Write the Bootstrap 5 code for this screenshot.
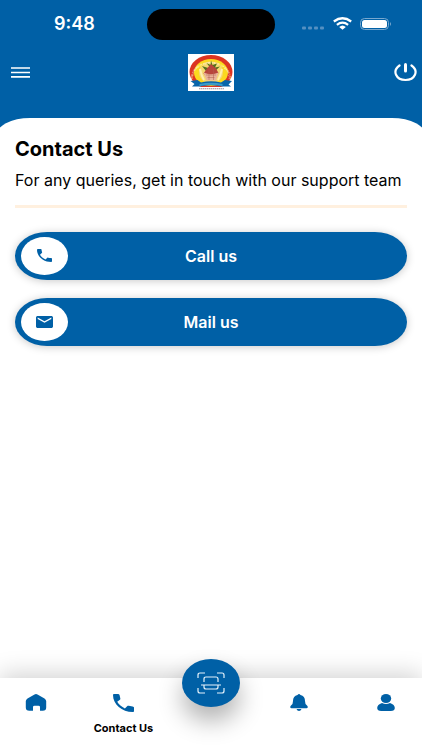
<!DOCTYPE html>
<html lang="en">
<head>
<meta charset="utf-8">
<meta name="viewport" content="width=device-width, initial-scale=1">
<title>Contact Us</title>
<link href="https://cdn.jsdelivr.net/npm/bootstrap@5.3.0/dist/css/bootstrap.min.css" rel="stylesheet">
<style>
:root { --brand: #0060a6; }
body { font-family: Inter, "Open Sans", sans-serif; background: var(--brand); color: #000; overflow-x: hidden; }
svg { display: block; }
.status { height: 49px; padding: 9px 30px 0; }
.clock { font-size: 18px; line-height: 30px; font-weight: 600; flex: 1 1 0; }
.island { width: 128px; height: 31px; border-radius: 16px; background: #000; }
.signals { flex: 1 1 0; gap: 8px; }
.topbar { height: 69px; padding: 5px 5px 0; }
.topbar .side { flex: 1 1 0; }
.menu { margin-left: 5px; }
.sheet { background: #fff; border-radius: 34px 34px 0 0 / 18px 18px 0 0; margin: 0 -4px; padding: 19px 19px; }
.title { font-size: 20px; line-height: 24px; font-weight: 700; margin: 0 0 8px; }
.intro { font-size: 16px; line-height: 22px; margin: 0 0 14px; }
.rule { height: 3px; background: #fff0df; border: 0; opacity: 1; margin: 0 0 24px; }
.actions { gap: 18px; }
.action { height: 48px; border: 0; border-radius: 32px / 24px; background: var(--brand); color: #fff;
  font-size: 16px; line-height: 22px; font-weight: 600; padding: 4px 6px 5px; box-shadow: 0 1px 8px rgba(0,0,0,.22); }
.action:hover { background: #00528f; color: #fff; }
.disc { width: 47px; height: 38px; border-radius: 50%; background: #fff; }
.tabs { background: #fff; height: 72px; box-shadow: 0 -4px 24px rgba(0,0,0,.18); }
.tab { width: 72px; padding-top: 16px; gap: 9px; color: #000; font-size: 11px; line-height: 14px; font-weight: 700; }
.scan { width: 58px; height: 48px; border: 0; border-radius: 50%; background: var(--brand); margin-top: -19px;
  box-shadow: 0 14px 24px rgba(0,0,0,.3); }
.seal { font: 700 5px Inter, sans-serif; fill: #fff3c8; text-anchor: middle; }
</style>
<script src="https://cdn.jsdelivr.net/npm/bootstrap@5.3.0/dist/js/bootstrap.bundle.min.js"></script>
</head>
<body class="d-flex flex-column min-vh-100">
<header class="text-white">
  <div class="status d-flex align-items-start">
    <div class="clock"><span class="ps-4">9:48</span></div>
    <div class="island"></div>
    <div class="signals d-flex justify-content-end align-items-center align-self-start">
      <svg width="23" height="30" viewBox="0 0 23 30" fill="#5590c2" aria-hidden="true"><rect x="0" y="17.500" width="4" height="3" rx="1"/><rect x="6" y="17.500" width="4" height="3" rx="1"/><rect x="12" y="17.500" width="4" height="3" rx="1"/><rect x="18" y="17.500" width="4" height="3" rx="1"/></svg>
      <svg width="19" height="30" viewBox="0 0 19 30" fill="none" stroke="#fff" stroke-width="2.200" aria-hidden="true"><path d="M.8 12.500Q9.500 6 18.200 12.500M3.900 15.900Q9.500 11.500 15.100 15.900"/><path d="M6.200 18Q9.500 15 12.800 18L9.500 20.800z" fill="#fff" stroke="none"/></svg>
      <svg width="32" height="30" viewBox="0 0 32 30" aria-hidden="true"><rect x=".5" y="9.500" width="28" height="11" rx="4" fill="none" stroke="#78a8cf"/><rect x="2" y="11" width="25" height="8" rx="2.500" fill="#fff"/><path d="M30 13q2 2 0 4z" fill="#78a8cf"/></svg>
    </div>
  </div>
  <div class="topbar d-flex align-items-start">
    <div class="side">
      <button class="btn menu p-0 border-0" type="button" aria-label="Menu">
        <svg width="20" height="36" viewBox="0 0 20 36" stroke="#fff" stroke-width="1.700"><path d="M1 14h19M1 18.500h19M1 22.800h19"/></svg>
      </button>
    </div>
    <svg width="46" height="37" viewBox="0 0 92 74" role="img" aria-label="Bank logo">
      <path fill="#fff" d="M0 0h92v74H0z"/>
      <ellipse cx="46" cy="36" rx="43" ry="34" fill="#dc3422"/>
      <ellipse cx="46" cy="37" rx="34" ry="27" fill="#fbd91f"/>
      <ellipse cx="46" cy="37" rx="24" ry="22" fill="#f6d870"/>
      <path id="arc" d="M11 54A36 28 0 1 1 81 54" fill="none"/>
      <text class="seal"><textPath href="#arc" startOffset="50%">THE CHEMBUR PEOPLE'S CO-OP BANK LTD</textPath></text>
      <path d="M46 29L37 18l8 4 1-9 3 9 9-3-4 8 10-2-10 9H36l-8-10 9 3z" fill="#52711d"/>
      <path d="M38 29l8-9 10 9 5 9-8 10H39l-8-9z" fill="#b8453c"/>
      <path d="M31 37q15 7 30 0l-5 16H37z" fill="#e9b49a"/>
      <path d="M36 42h20M39 47h14M42 30v22M51 30v22" stroke="#b05c50"/>
      <path d="M24 30q3 14 8 22M68 30q-3 14-8 22" fill="none" stroke="#fff0b0" stroke-width="4"/>
      <path d="M5 54l14-2 7 5q20-5 40 0l8-5 14 2-7 7 5 4H68q-22-5-44 0H8l5-5z" fill="#0865aa"/>
      <path d="M23 60q23-5 46 0v4q-23-4-46 0z" fill="#3a9bc8"/>
      <path d="M17 66h58v8H17z" fill="#fff"/>
      <path d="M22 69.500h50" stroke="#9a8a95" stroke-width="2" stroke-dasharray="3 1"/>
    </svg>
    <div class="side d-flex justify-content-end">
      <button class="btn p-0 border-0" type="button" aria-label="Log out">
        <svg width="23" height="36" viewBox="0 0 23 36" fill="none" stroke="#fff" stroke-linecap="round"><path d="M5.500 11.500C-2.200 17 2 26 11.500 26S25.200 17 17.500 11.500" stroke-width="2.200"/><path d="M11.500 10.500v6.500" stroke-width="3"/></svg>
      </button>
    </div>
  </div>
</header>

<main class="sheet flex-grow-1">
  <h1 class="title">Contact Us</h1>
  <p class="intro">For any queries, get in touch with our support team</p>
  <hr class="rule">
  <div class="actions d-grid">
    <button class="btn action d-flex align-items-center" type="button">
      <span class="disc d-flex align-items-center justify-content-center">
        <svg width="15" height="13" viewBox="3 3 18 18" preserveAspectRatio="none" fill="#0060a6"><path d="M6.600 10.800c1.400 2.800 3.800 5.100 6.600 6.600l2.200-2.200c.3-.3.700-.4 1-.2 1.100.4 2.300.6 3.600.6.600 0 1 .4 1 1V20c0 .6-.4 1-1 1C10.600 21 3 13.400 3 4c0-.6.500-1 1-1h3.500c.6 0 1 .5 1 1 0 1.300.2 2.500.6 3.600.1.300 0 .7-.3 1z"/></svg>
      </span>
      <span class="flex-grow-1">Call us</span><span class="disc invisible"></span>
    </button>
    <button class="btn action d-flex align-items-center" type="button">
      <span class="disc d-flex align-items-center justify-content-center">
        <svg width="17" height="12" viewBox="2 4 20 16" preserveAspectRatio="none" fill="#0060a6"><path d="M20 4H4C2.900 4 2 4.900 2 6v12c0 1.100.9 2 2 2h16c1.100 0 2-.9 2-2V6c0-1.100-.9-2-2-2zm0 4l-8 5-8-5V6l8 5 8-5z"/></svg>
      </span>
      <span class="flex-grow-1">Mail us</span><span class="disc invisible"></span>
    </button>
  </div>
</main>

<nav class="tabs d-flex justify-content-between align-items-start" aria-label="Main">
  <a class="tab d-flex flex-column align-items-center text-decoration-none" href="#home" aria-label="Home">
    <svg width="22" height="17" viewBox="0 0 22 17" fill="#0060a6"><path d="M9.500.5Q11-.4 12.500.5l7 4Q21 5.500 21.200 7v6.500q0 3.200-3.500 3.200H15V13q0-1.300-1.500-1.300h-4Q8 11.700 8 13v3.700H4.300Q.8 16.700.8 13.500V7Q1 5.500 2.500 4.500z"/></svg>
  </a>
  <a class="tab d-flex flex-column align-items-center text-decoration-none text-nowrap" href="#contact" aria-current="page">
    <svg width="21" height="18" viewBox="3 3 18 18" preserveAspectRatio="none" fill="#0060a6"><path d="M6.600 10.800c1.400 2.800 3.800 5.100 6.600 6.600l1.900-2.200c.5-.5.900-.5 1.400-.4l3.300.6c.8.1 1.200.5 1.200 1.200V20c0 .6-.4 1-1 1C10.600 21 3 13.400 3 4c0-.6.500-1 1-1h3.300c.7 0 1.100.4 1.300 1.100l.7 3.400c.1.500 0 .9-.4 1.200z"/></svg>
    Contact Us
  </a>
  <div class="tab p-0 d-flex justify-content-center">
    <button class="scan d-flex align-items-center justify-content-center p-0" type="button" aria-label="Scan">
      <svg width="28" height="24" viewBox="0 0 28 24" fill="none" stroke="#e5f2fb" stroke-width="1.200"><path d="M1 7V4q0-2 2-2h5M20 2h5q2 0 2 2v3M1 17v3q0 2 2 2h5M20 22h5q2 0 2-2v-3M7 11V8q0-2 2-2h10q2 0 2 2v3M4 14h20M7 14v2q0 2 2 2h10q2 0 2-2v-2"/></svg>
    </button>
  </div>
  <a class="tab d-flex flex-column align-items-center text-decoration-none" href="#alerts" aria-label="Notifications">
    <svg width="18" height="17" viewBox="0 0 18 17" fill="#0060a6"><path d="M7.500 1Q9-.8 10.500 1 15 2 15 7q0 3.500 2 4.500 1 .7.700 2-.3.700-1.200.7h-15q-.9 0-1.200-.7-.3-1.300.7-2Q3 10.500 3 7q0-5 4.500-6zM6.500 15h5Q10.800 17 9 17t-2.500-2z"/></svg>
  </a>
  <a class="tab d-flex flex-column align-items-center text-decoration-none" href="#profile" aria-label="Profile">
    <svg width="18" height="17" viewBox="0 0 18 17" fill="#0060a6"><ellipse cx="9" cy="4.500" rx="5.200" ry="4.500"/><path d="M5 9q4 2 8 0 4.800 1.500 4.800 5 0 3-4 3H4.200q-4 0-4-3Q.2 10.500 5 9z"/></svg>
  </a>
</nav>
</body>
</html>
